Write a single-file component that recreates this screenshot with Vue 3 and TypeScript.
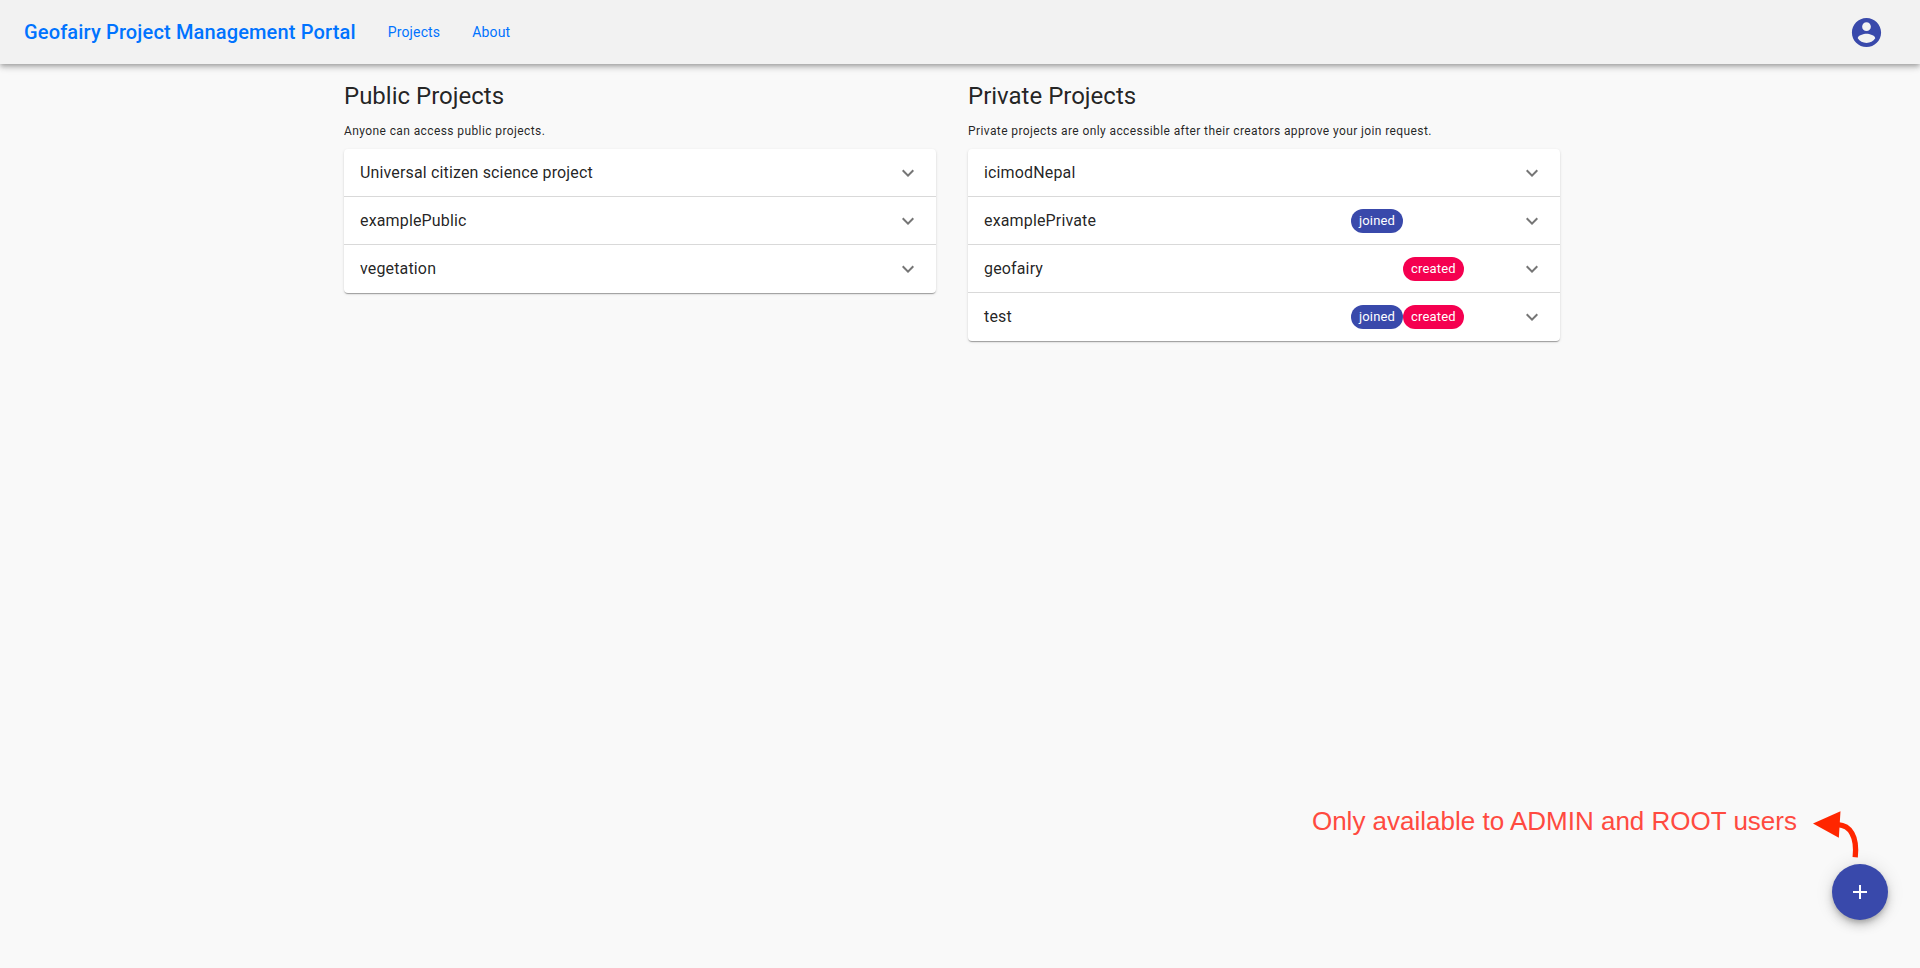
<script setup lang="ts">
interface Project {
  name: string
  joined?: boolean
  created?: boolean
}

interface ProjectGroup {
  title: string
  caption: string
  projects: Project[]
}

const links: string[] = ['Projects', 'About']

const groups: ProjectGroup[] = [
  {
    title: 'Public Projects',
    caption: 'Anyone can access public projects.',
    projects: [
      { name: 'Universal citizen science project' },
      { name: 'examplePublic' },
      { name: 'vegetation' },
    ],
  },
  {
    title: 'Private Projects',
    caption: 'Private projects are only accessible after their creators approve your join request.',
    projects: [
      { name: 'icimodNepal' },
      { name: 'examplePrivate', joined: true },
      { name: 'geofairy', created: true },
      { name: 'test', joined: true, created: true },
    ],
  },
]
</script>

<template>
  <div class="page">
    <header class="app-bar">
      <span class="brand">Geofairy Project Management Portal</span>
      <nav class="nav">
        <a v-for="link in links" :key="link" class="nav-link">{{ link }}</a>
      </nav>
      <button class="account" aria-label="Account">
        <svg viewBox="0 0 24 24" width="35" height="35" fill="currentColor">
          <path d="M12 2C6.48 2 2 6.48 2 12s4.48 10 10 10 10-4.48 10-10S17.52 2 12 2zm0 3c1.66 0 3 1.34 3 3s-1.34 3-3 3-3-1.34-3-3 1.34-3 3-3zm0 14.2c-2.5 0-4.71-1.28-6-3.22.03-1.99 4-3.08 6-3.08 1.99 0 5.97 1.09 6 3.08-1.29 1.94-3.5 3.22-6 3.22z" />
        </svg>
      </button>
    </header>

    <main class="content">
      <section v-for="group in groups" :key="group.title" class="group">
        <h5 class="group-title">{{ group.title }}</h5>
        <span class="group-caption">{{ group.caption }}</span>
        <div class="panels">
          <div v-for="project in group.projects" :key="project.name" class="panel">
            <span class="name">{{ project.name }}</span>
            <span class="slot joined-slot">
              <span v-if="project.joined" class="chip chip-joined">joined</span>
            </span>
            <span class="slot created-slot">
              <span v-if="project.created" class="chip chip-created">created</span>
            </span>
            <svg class="chevron" viewBox="0 0 24 24" width="24" height="24" fill="currentColor">
              <path d="M16.59 8.59L12 13.17 7.41 8.59 6 10l6 6 6-6z" />
            </svg>
          </div>
        </div>
      </section>
    </main>

    <div class="hint">
      <span class="hint-text">Only available to ADMIN and ROOT users</span>
      <svg class="hint-arrow" viewBox="0 0 48 48" width="48" height="48">
        <path d="M25 14.7C37 15.5 44.5 26 42.2 47.3" fill="none" stroke="#ff2600" stroke-width="5.3" />
        <path d="M0 13.4L27.5 1.2 25.8 27.8z" fill="#ff2600" />
      </svg>
    </div>

    <button class="fab" aria-label="Add project">
      <svg viewBox="0 0 24 24" width="24" height="24" fill="currentColor">
        <path d="M19 13h-6v6h-2v-6H5v-2h6V5h2v6h6v2z" />
      </svg>
    </button>
  </div>
</template>

<style>
body {
  margin: 0;
  background: #f9f9f9;
}
</style>

<style scoped>
.page {
  position: relative;
  box-sizing: border-box;
  height: 968px;
  background: #f9f9f9;
  color: rgba(0, 0, 0, 0.87);
  font-family: Roboto, "Liberation Sans", sans-serif;
  font-size: 16px;
  overflow: hidden;
}

.app-bar {
  position: relative;
  display: flex;
  align-items: center;
  box-sizing: border-box;
  height: 64px;
  padding: 0 36px 0 24px;
  background: #f2f2f2;
  color: #0073ff;
  box-shadow:
    0 2px 4px -1px rgba(0, 0, 0, 0.2),
    0 4px 5px 0 rgba(0, 0, 0, 0.14),
    0 1px 10px 0 rgba(0, 0, 0, 0.12);
}

.brand {
  font-size: 20px;
  font-weight: 500;
  line-height: 32px;
  letter-spacing: 0.15px;
}

.nav {
  display: flex;
  gap: 32px;
  margin-left: 32px;
}

.nav-link {
  font-size: 14px;
  line-height: 20px;
  letter-spacing: 0.15px;
}

.account,
.fab {
  display: flex;
  align-items: center;
  justify-content: center;
  padding: 0;
  border: 0;
  background: none;
}

.account {
  margin-left: auto;
  color: #3949ab;
}

.content {
  display: grid;
  grid-template-columns: 1fr 1fr;
  gap: 32px;
  align-items: start;
  width: 1216px;
  margin: 16px auto 0 344px;
}

.group {
  display: flex;
  flex-direction: column;
}

.group-title {
  margin: 0;
  font-size: 24px;
  font-weight: 400;
  line-height: 32px;
}

.group-caption {
  margin: 9px 0 8px;
  font-size: 12px;
  line-height: 20px;
  letter-spacing: 0.4px;
}

.panels {
  border-radius: 4px;
  background: #fff;
  box-shadow:
    0 2px 1px -1px rgba(0, 0, 0, 0.2),
    0 1px 1px 0 rgba(0, 0, 0, 0.14),
    0 1px 3px 0 rgba(0, 0, 0, 0.12);
}

.panel {
  display: flex;
  align-items: center;
  box-sizing: border-box;
  height: 48px;
  padding: 0 16px;
}

.panel + .panel {
  box-shadow: 0 -1px 0 rgba(0, 0, 0, 0.15);
}

.name {
  flex: 1;
  font-size: 16px;
  line-height: 24px;
  letter-spacing: 0.15px;
}

.slot {
  display: flex;
}

.joined-slot {
  width: 52px;
}

.created-slot {
  width: 117px;
}

.chip {
  box-sizing: border-box;
  height: 24px;
  padding: 0 8px;
  border-radius: 12px;
  color: #fff;
  font-size: 13px;
  line-height: 24px;
  letter-spacing: 0.17px;
}

.chip-joined {
  background: #3949ab;
}

.chip-created {
  background: #f50050;
}

.chevron {
  color: rgba(0, 0, 0, 0.54);
}

.hint {
  position: absolute;
  top: 810px;
  right: 59px;
  display: flex;
  align-items: flex-start;
  gap: 16px;
}

.hint-text {
  color: #ff4a40;
  font-family: "Liberation Sans", Arial, sans-serif;
  font-size: 26px;
  line-height: 23px;
  white-space: nowrap;
}

.fab {
  position: absolute;
  right: 32px;
  bottom: 48px;
  width: 56px;
  height: 56px;
  border-radius: 50%;
  background: #3949ab;
  color: #fff;
  box-shadow:
    0 3px 5px -1px rgba(0, 0, 0, 0.2),
    0 6px 10px 0 rgba(0, 0, 0, 0.14),
    0 1px 18px 0 rgba(0, 0, 0, 0.12);
}
</style>
